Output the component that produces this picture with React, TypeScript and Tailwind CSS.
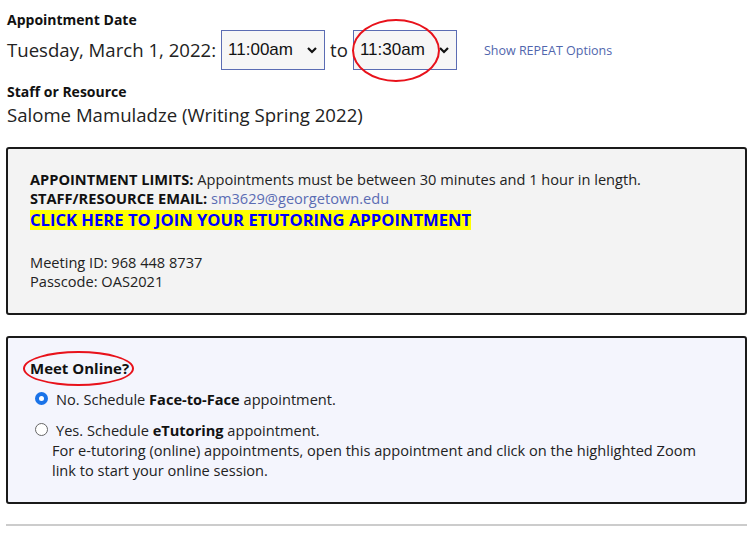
import React from "react"

function TimeSelect(props: { value: string; circled?: boolean }) {
  return (
    <div className="relative">
      <div className="w-[104px] h-[40px] border border-[#5b6cb3] bg-[#f6f6f6] flex items-center justify-between pl-[6px] pr-[6px] text-[17px] text-[#111] font-['Liberation_Sans',Arial,sans-serif]">
        <span>{props.value}</span>
        <svg width="12" height="12" viewBox="0 0 12 12">
          <path d="M2 4 L6 8 L10 4" fill="none" stroke="#111" strokeWidth="2.2" />
        </svg>
      </div>
      {props.circled && (
        <div className="absolute left-[-1px] top-[-11px] w-[88px] h-[63px] border-2 border-[#e8121b] rounded-[50%]" />
      )}
    </div>
  )
}

function Radio(props: { checked?: boolean }) {
  return props.checked ? (
    <span className="w-[13px] h-[13px] rounded-full border-[3px] border-[#1a73e8] bg-[#1a73e8] flex items-center justify-center shrink-0">
      <span className="w-[5px] h-[5px] rounded-full bg-white" />
    </span>
  ) : (
    <span className="w-[13px] h-[13px] rounded-full border border-[#666] bg-white shrink-0" />
  )
}

export default function App() {
  return (
    <div className="w-[756px] h-[543px] bg-white pl-[6px] pr-[9px] pt-[10px] font-['Open_Sans',sans-serif] text-[#222] overflow-hidden">
      <div className="font-bold text-[14px] leading-[20px] pl-[1px] text-[#111]">Appointment Date</div>
      <div className="flex items-center pl-[1px]">
        <span className="text-[18.6px] text-[#222] mr-[5px]">Tuesday, March 1, 2022:</span>
        <TimeSelect value="11:00am" />
        <span className="text-[18.6px] text-[#222] mx-[5px]">to</span>
        <TimeSelect value="11:30am" circled />
        <span className="text-[12.5px] text-[#5166ad] ml-[27px] mt-[3px]">Show REPEAT Options</span>
      </div>
      <div className="font-bold text-[14px] leading-[20px] mt-[12px] pl-[1px] text-[#111]">Staff or Resource</div>
      <div className="text-[18.6px] leading-[26px] pl-[1px] text-[#222]">Salome Mamuladze (Writing Spring 2022)</div>

      <div className="mt-[19px] border-2 border-[#1a1a1a] rounded-[3px] bg-[#f3f3f3] h-[168px] pl-[22px] pt-[21px] text-[14.6px] leading-[19px] text-[#222]">
        <div>
          <span className="font-bold text-[#111]">APPOINTMENT LIMITS:</span> Appointments must be between 30 minutes and 1 hour in length.
        </div>
        <div>
          <span className="font-bold text-[#111]">STAFF/RESOURCE EMAIL:</span>{" "}
          <span className="text-[#5b6cb3]">sm3629@georgetown.edu</span>
        </div>
        <div className="mt-[2px]">
          <span className="bg-[#ffff00] text-[#0000ff] font-bold text-[16.6px] leading-[20px] inline-block">CLICK HERE TO JOIN YOUR ETUTORING APPOINTMENT</span>
        </div>
        <div className="mt-[23px]">Meeting ID: 968 448 8737</div>
        <div>Passcode: OAS2021</div>
      </div>

      <div className="mt-[21px] border-2 border-[#1a1a1a] rounded-[3px] bg-[#f4f5fd] h-[168px] pl-[22px] pt-[20px] text-[14.6px] text-[#222]">
        <div className="relative inline-block">
          <span className="font-bold text-[15px] text-[#111] leading-[20px]">Meet Online?</span>
          <div className="absolute left-[-7px] top-[-7px] w-[111px] h-[35px] border-2 border-[#e8121b] rounded-[50%]" />
        </div>
        <div className="flex items-center gap-[8px] mt-[9px] pl-[5px] leading-[20px]">
          <Radio checked />
          <span>
            No. Schedule <b className="text-[#111]">Face-to-Face</b> appointment.
          </span>
        </div>
        <div className="flex items-center gap-[8px] mt-[11px] pl-[5px] leading-[20px]">
          <Radio />
          <span>
            Yes. Schedule <b className="text-[#111]">eTutoring</b> appointment.
          </span>
        </div>
        <div className="pl-[22px] leading-[20px]">
          For e-tutoring (online) appointments, open this appointment and click on the highlighted Zoom
          <br />
          link to start your online session.
        </div>
      </div>

      <div className="mt-[20px] h-[2px] bg-[#cccccc]" />
    </div>
  )
}
